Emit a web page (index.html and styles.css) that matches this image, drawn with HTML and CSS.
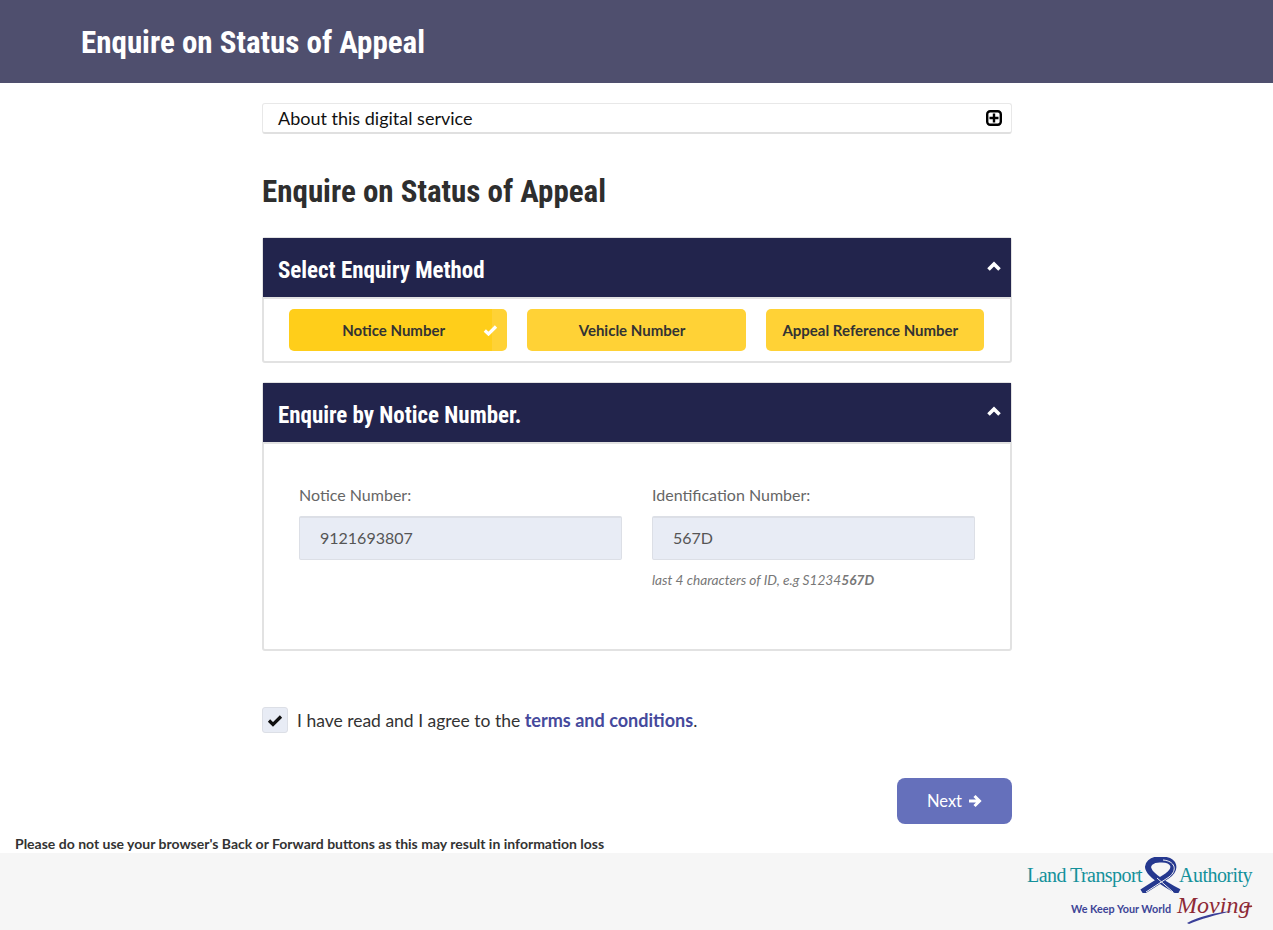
FILE: index.html
```html
<!DOCTYPE html>
<html lang="en">
<head>
<meta charset="utf-8">
<title>Enquire on Status of Appeal</title>
<link rel="stylesheet" href="styles.css">
</head>
<body>
<header class="top"><h1 class="top-title">Enquire on Status of Appeal</h1></header>
<main class="wrap">
  <div class="about">
    <span>About this digital service</span>
    <svg class="about-icon" width="16" height="16" viewBox="0 0 16 16"><rect x="1.200" y="1.200" width="13.600" height="13.600" rx="3" fill="#fff" stroke="#000" stroke-width="2.400"/><path d="M8 3.500v9M3.500 8h9" stroke="#000" stroke-width="2.400"/></svg>
  </div>
  <h2 class="page-title">Enquire on Status of Appeal</h2>
  <section class="panel panel-method">
    <div class="panel-head">
      <h3 class="panel-title">Select Enquiry Method</h3>
      <svg class="chev" width="14" height="11" viewBox="0 0 14 11"><path d="M1.500 8.500L7 3l5.500 5.500" fill="none" stroke="#fff" stroke-width="3.600"/></svg>
    </div>
    <div class="methods">
      <button class="method selected">Notice Number
        <span class="method-tab"><svg width="15" height="12" viewBox="0 0 15 12"><path d="M1.800 6.500L5.500 10 13 2.500" fill="none" stroke="#fff" stroke-width="3.200"/></svg></span>
      </button>
      <button class="method">Vehicle Number</button>
      <button class="method">Appeal Reference Number</button>
    </div>
  </section>
  <section class="panel panel-form">
    <div class="panel-head">
      <h3 class="panel-title">Enquire by Notice Number.</h3>
      <svg class="chev" width="14" height="11" viewBox="0 0 14 11"><path d="M1.500 8.500L7 3l5.500 5.500" fill="none" stroke="#fff" stroke-width="3.600"/></svg>
    </div>
    <div class="fields">
      <div class="field">
        <label class="field-label">Notice Number:</label>
        <div class="input">9121693807</div>
      </div>
      <div class="field">
        <label class="field-label">Identification Number:</label>
        <div class="input">567D</div>
        <p class="hint">last 4 characters of ID, e.g S1234<b>567D</b></p>
      </div>
    </div>
  </section>
  <div class="agree">
    <span class="check"><svg width="16" height="13" viewBox="0 0 16 13"><path d="M2 6.500L6 10.500 14 2.500" fill="none" stroke="#111" stroke-width="3.200"/></svg></span>
    <span>I have read and I agree to the <a class="link">terms and conditions</a>.</span>
  </div>
  <div class="actions">
    <button class="next"><span class="next-text">Next</span>
      <svg width="14" height="14" viewBox="0 0 14 14"><path d="M1 7h10M6.500 2l5 5-5 5" fill="none" stroke="#fff" stroke-width="3"/></svg>
    </button>
  </div>
</main>
<p class="warning">Please do not use your browser's Back or Forward buttons as this may result in information loss</p>
<footer class="foot">
  <div class="logo">
    <div class="logo-row1">
      <span class="logo-lta">Land Transport</span>
      <svg class="ribbon" width="48" height="36" viewBox="0 0 48 36">
        <path d="M5 35L30 19C40 12 38 3 25 2.500 14 1.500 9 8 12 13 14 18 22 24 42 35" fill="none" stroke="#25388f" stroke-width="6"/>
        <path d="M9 35L32 20C41 13 38 4 26 3" fill="none" stroke="#f6f6f6" stroke-width="1"/>
        <path d="M20 21L36 35" fill="none" stroke="#f6f6f6" stroke-width="1"/>
      </svg>
      <span class="logo-lta">Authority</span>
    </div>
    <div class="logo-row2">
      <span class="logo-keep">We Keep Your World</span>
      <span class="logo-moving">Moving</span>
      <svg class="flourish" width="78" height="28" viewBox="0 0 78 28">
        <path d="M11 27C24 20 38 17 56 15 40 19 24 23 13 28Z" fill="#3a3f98"/>
        <path d="M68 11C71 10 74 11 76 10" fill="none" stroke="#8e2a35" stroke-width="1.400"/>
      </svg>
    </div>
  </div>
</footer>
</body>
</html>
```
FILE: styles.css
```css
* { box-sizing: border-box; }
html, body { margin: 0; padding: 0; }
body { font-family: Lato, sans-serif; color: #333; background: #fff; height: 930px; overflow: hidden; }
h1, h2, h3, p { margin: 0; }
.top { height: 83px; background: #4f4f6e; padding: 2px 0 0 81px; display: flex; align-items: center; }
.top-title, .page-title, .panel-title { font-family: "Liberation Sans Narrow", "Roboto Condensed", Roboto, sans-serif; font-weight: 700; }
.top-title { font-size: 31px; color: #fff; line-height: 1; }
.wrap { width: 750px; margin-left: 262px; padding-top: 20px; }
.about { height: 31px; border: 1px solid #e8e8e8; border-bottom: 2px solid #e0e0e0; border-radius: 3px; padding: 0 9px 0 15px; display: flex; align-items: center; justify-content: space-between; font-size: 18px; color: #111; }
.about-icon { display: block; }
.page-title { font-size: 31px; line-height: 36px; color: #2e2e2e; margin-top: 40px; }
.panel { border: 2px solid #e2e2e2; border-top-width: 1px; border-radius: 3px; }
.panel-method { margin-top: 27px; height: 126px; }
.panel-form { margin-top: 19px; height: 269px; }
.panel-head { height: 59px; background: #22244c; display: flex; align-items: center; justify-content: space-between; padding: 4px 10px 0 15px; margin: 0 -1px; }
.panel-title { font-size: 24px; color: #fff; line-height: 1; transform: scaleX(.955); transform-origin: left center; }
.chev { display: block; margin-top: -7px; }
.methods { display: flex; gap: 20px; padding: 10px 26px 10px 25px; border-top: 2px solid #e2e2e2; }
.method { flex: 1 1 0; height: 42px; border: 0; border-radius: 5px; background: #ffd236; font: 700 15px Lato, sans-serif; color: #333; padding: 0 9px 0 0; position: relative; }
.method.selected { background: linear-gradient(to right, #ffce1a 0, #ffce1a 203px, #ffd236 203px); }
.method-tab { position: absolute; right: 9px; top: 15px; line-height: 0; }
.fields { display: flex; gap: 30px; padding: 41px 35px 0; border-top: 2px solid #e2e2e2; }
.field { width: 323px; }
.field-label { display: block; font-size: 16px; line-height: 20px; color: #666; }
.input { height: 44px; margin-top: 11px; background: #e8ecf5; border: 1px solid #dcdfe6; border-top: 2px solid #dcdfe6; border-radius: 2px; padding: 0 0 2px 20px; display: flex; align-items: center; font-size: 16px; color: #555; }
.hint { margin-top: 12px; font-size: 13.700px; line-height: 16px; font-style: italic; color: #777; }
.agree { margin-top: 56px; display: flex; align-items: center; gap: 9px; font-size: 17.500px; color: #333; }
.check { width: 26px; height: 26px; background: #e8ecf5; border: 1px solid #dcdfe6; border-radius: 3px; display: flex; align-items: center; justify-content: center; }
.link { font-size: 18.070px; font-weight: 700; color: #45499c; }
.actions { margin-top: 45px; display: flex; justify-content: flex-end; }
.next { width: 115px; height: 46px; border: 0; border-radius: 8px; background: #6570bb; color: #fff; font: 400 16.500px Lato, sans-serif; display: flex; align-items: center; justify-content: center; gap: 6px; padding: 0; }
.next-text { margin-top: -1px; }
.warning { margin: 12px 0 0 15px; font-size: 14px; line-height: 16px; font-weight: 700; color: #333; }
.foot { margin-top: 1px; height: 77px; background: #f6f6f6; display: flex; justify-content: flex-end; padding-right: 20px; }
.logo { width: 226px; padding-top: 4px; }
.logo-row1 { display: flex; align-items: flex-start; height: 36px; color: #14919b; font-family: "Liberation Serif", serif; font-size: 20px; white-space: nowrap; }
.logo-lta { margin-top: 6px; line-height: 24px; letter-spacing: -.55px; }
.ribbon { margin: 0 -6px 0 -5px; flex: none; }
.logo-row2 { position: relative; margin-top: 2px; padding-left: 44px; height: 26px; display: flex; align-items: center; white-space: nowrap; }
.logo-keep { font-family: Lato, sans-serif; font-size: 10.800px; font-weight: 700; color: #3d4596; }
.logo-moving { margin: 0 0 6px 6px; font-family: "Liberation Serif", serif; font-style: italic; font-size: 24px; line-height: 22px; color: #8e2a35; }
.flourish { position: absolute; left: 149px; top: 1px; }
```
